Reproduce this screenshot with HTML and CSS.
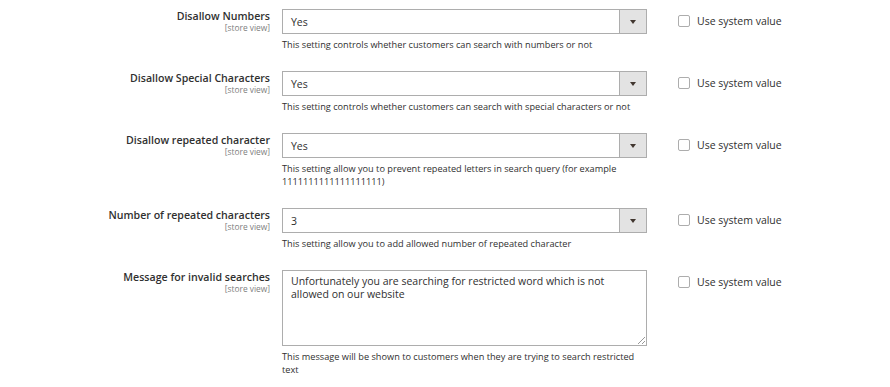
FILE: index.html
```html
<!DOCTYPE html>
<html lang="en">
<head>
    <meta charset="UTF-8">
    <title>Search Restrictions</title>
    <link rel="stylesheet" href="styles.css">
</head>
<body>
    <div class="config">
        <div class="row">
            <div class="label">
                <span class="name">Disallow Numbers</span>
                <span class="scope">[store view]</span>
            </div>
            <div class="value">
                <div class="select"><span>Yes</span><span class="arrow"></span></div>
                <p class="note">This setting controls whether customers can search with numbers or not</p>
            </div>
            <label class="use-default"><span class="box"></span>Use system value</label>
        </div>

        <div class="row">
            <div class="label">
                <span class="name">Disallow Special Characters</span>
                <span class="scope">[store view]</span>
            </div>
            <div class="value">
                <div class="select"><span>Yes</span><span class="arrow"></span></div>
                <p class="note">This setting controls whether customers can search with special characters or not</p>
            </div>
            <label class="use-default"><span class="box"></span>Use system value</label>
        </div>

        <div class="row">
            <div class="label">
                <span class="name">Disallow repeated character</span>
                <span class="scope">[store view]</span>
            </div>
            <div class="value">
                <div class="select"><span>Yes</span><span class="arrow"></span></div>
                <p class="note">This setting allow you to prevent repeated letters in search query (for example 1111111111111111111)</p>
            </div>
            <label class="use-default"><span class="box"></span>Use system value</label>
        </div>

        <div class="row">
            <div class="label">
                <span class="name">Number of repeated characters</span>
                <span class="scope">[store view]</span>
            </div>
            <div class="value">
                <div class="select"><span>3</span><span class="arrow"></span></div>
                <p class="note">This setting allow you to add allowed number of repeated character</p>
            </div>
            <label class="use-default"><span class="box"></span>Use system value</label>
        </div>

        <div class="row">
            <div class="label">
                <span class="name">Message for invalid searches</span>
                <span class="scope">[store view]</span>
            </div>
            <div class="value">
                <div class="textarea">Unfortunately you are searching for restricted word which is not allowed on our website<span class="grip"></span></div>
                <p class="note">This message will be shown to customers when they are trying to search restricted text</p>
            </div>
            <label class="use-default"><span class="box"></span>Use system value</label>
        </div>
    </div>
</body>
</html>
```

FILE: styles.css
```css
body { margin: 0; background: #fff; font-family: "Open Sans", "Liberation Sans", sans-serif; color: #303030; }
.config { padding-top: 9px; }
.row { display: flex; align-items: flex-start; padding-bottom: 20px; }
.label { width: 270px; display: flex; flex-direction: column; align-items: flex-end; }
.name { font-size: 10.6px; font-weight: 600; color: #303030; line-height: 14px; }
.scope { font-size: 8.4px; color: #808080; line-height: 10px; }
.value { width: 365px; margin-left: 12px; }
.select { height: 25px; box-sizing: border-box; border: 1px solid #adadad; display: flex; align-items: center; font-size: 10.5px; color: #303030; position: relative; padding-left: 8px; }
.select .arrow { position: absolute; right: 0; top: 0; bottom: 0; width: 26px; border-left: 1px solid #adadad; background: #e3e3e3; }
.select .arrow::after { content: ""; position: absolute; left: 10px; top: 10px; border-left: 3.5px solid transparent; border-right: 3.5px solid transparent; border-top: 4px solid #41362f; }
.textarea { height: 76px; box-sizing: border-box; border: 1px solid #adadad; padding: 4px 8px; font-size: 10.5px; line-height: 13px; color: #303030; position: relative; }
.grip { position: absolute; right: 1px; bottom: 1px; width: 7px; height: 7px; background: linear-gradient(135deg, transparent 45%, #999 45%, #999 55%, transparent 55%, transparent 75%, #999 75%, #999 85%, transparent 85%); }
.note { margin: 4px 0 0; font-size: 9.2px; line-height: 13px; color: #303030; }
.use-default { display: flex; align-items: center; margin-left: 31px; margin-top: 5px; font-size: 10.5px; color: #303030; }
.box { width: 12px; height: 12px; box-sizing: border-box; border: 1px solid #adadad; border-radius: 2px; margin-right: 7px; background: #fff; }
```
